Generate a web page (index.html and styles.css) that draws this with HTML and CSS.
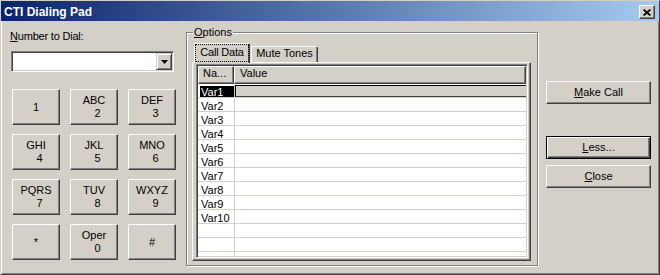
FILE: index.html
```html
<!DOCTYPE html>
<html lang="en">
  <head>
    <meta charset="UTF-8" />
    <title>CTI Dialing Pad</title>
    <link rel="stylesheet" href="styles.css">
  </head>
  <body>
    <div class="window">
      <div class="titlebar">
        <span class="title">CTI Dialing Pad</span>
        <button class="title-close" aria-label="Close">
          <svg width="8" height="7" viewBox="0 0 8 7">
            <path d="M0.6 0.5 L7.4 6.5 M7.4 0.5 L0.6 6.5" stroke="#000" stroke-width="1.7" fill="none" />
          </svg>
        </button>
      </div>

      <div class="content">
        <div class="dial-col">
          <label class="field-label" for="number"><u>N</u>umber to Dial:</label>
          <div class="combo">
            <div class="combo-input" id="number"></div>
            <div class="combo-btn">
              <svg width="7" height="4" viewBox="0 0 7 4"><polygon points="0,0 7,0 3.5,4" fill="#000" /></svg>
            </div>
          </div>

          <div class="keypad">
            <button class="key"><span>1</span></button>
            <button class="key"><span>ABC</span><span class="digit">2</span></button>
            <button class="key"><span>DEF</span><span class="digit">3</span></button>
            <button class="key"><span>GHI</span><span class="digit">4</span></button>
            <button class="key"><span>JKL</span><span class="digit">5</span></button>
            <button class="key"><span>MNO</span><span class="digit">6</span></button>
            <button class="key"><span>PQRS</span><span class="digit">7</span></button>
            <button class="key"><span>TUV</span><span class="digit">8</span></button>
            <button class="key"><span>WXYZ</span><span class="digit">9</span></button>
            <button class="key"><span>*</span></button>
            <button class="key"><span>Oper</span><span class="digit">0</span></button>
            <button class="key"><span>#</span></button>
          </div>
        </div>

        <div class="group">
          <span class="group-label"><u>O</u>ptions</span>
          <div class="tabs">
            <div class="tab active"><span class="focus">Call Data</span></div>
            <div class="tab">Mute Tones</div>
          </div>
          <div class="tab-panel">
            <div class="list">
              <div class="list-head">
                <div class="hcell name">Na...</div>
                <div class="hcell value">Value</div>
              </div>
              <div class="row selected">
                <div class="cell name"><span class="hilite">Var1</span></div>
                <div class="cell edit"></div>
              </div>
              <div class="row"><div class="cell name">Var2</div><div class="cell"></div></div>
              <div class="row"><div class="cell name">Var3</div><div class="cell"></div></div>
              <div class="row"><div class="cell name">Var4</div><div class="cell"></div></div>
              <div class="row"><div class="cell name">Var5</div><div class="cell"></div></div>
              <div class="row"><div class="cell name">Var6</div><div class="cell"></div></div>
              <div class="row"><div class="cell name">Var7</div><div class="cell"></div></div>
              <div class="row"><div class="cell name">Var8</div><div class="cell"></div></div>
              <div class="row"><div class="cell name">Var9</div><div class="cell"></div></div>
              <div class="row"><div class="cell name">Var10</div><div class="cell"></div></div>
              <div class="row"><div class="cell name"></div><div class="cell"></div></div>
              <div class="row"><div class="cell name"></div><div class="cell"></div></div>
              <div class="row"><div class="cell name"></div><div class="cell"></div></div>
            </div>
          </div>
        </div>

        <div class="actions">
          <button class="btn"><u>M</u>ake Call</button>
          <button class="btn default"><u>L</u>ess...</button>
          <button class="btn"><u>C</u>lose</button>
        </div>
      </div>
    </div>
  </body>
</html>
```

FILE: styles.css
```css
* {
  box-sizing: border-box;
}
body {
  margin: 0;
  background: #d4d0c8;
  font-family: "Liberation Sans", Arial, sans-serif;
  font-size: 11px;
  color: #000;
}
button {
  font: inherit;
  color: inherit;
  padding: 0;
  margin: 0;
}
.window {
  width: 660px;
  height: 275px;
  overflow: hidden;
  border: 1px solid;
  border-color: #d4d0c8 #404040 #404040 #d4d0c8;
  box-shadow: inset 1px 1px #fff, inset -1px -1px #808080;
}

/* title bar */
.titlebar {
  height: 20px;
  padding-top: 2px;
  display: flex;
  align-items: center;
  background: linear-gradient(to right, #0a246a, #a6caf0);
}
.title {
  flex: 1;
  padding-left: 3px;
  line-height: 14px;
  font-size: 12px;
  font-weight: bold;
  color: #fff;
}
.title-close {
  width: 16px;
  height: 14px;
  margin-right: 4px;
  display: flex;
  align-items: center;
  justify-content: center;
  background: #d4d0c8;
  border: 1px solid;
  border-color: #fff #404040 #404040 #fff;
  box-shadow: inset -1px -1px #808080;
}

.content {
  display: flex;
  align-items: flex-start;
  padding-left: 9px;
}

/* left column */
.dial-col {
  width: 167px;
  margin-top: 9px;
}
.field-label {
  display: block;
  line-height: 13px;
  letter-spacing: -0.2px;
}
.combo {
  width: 163px;
  height: 21px;
  margin: 8px 0 0 1px;
  display: flex;
  padding: 1px;
  background: #fff;
  border: 1px solid;
  border-color: #808080 #fff #fff #808080;
  box-shadow: inset 1px 1px #404040, inset -1px -1px #d4d0c8;
}
.combo-input {
  flex: 1;
}
.combo-btn {
  width: 16px;
  display: flex;
  align-items: center;
  justify-content: center;
  background: #d4d0c8;
  border: 1px solid;
  border-color: #d4d0c8 #404040 #404040 #d4d0c8;
  box-shadow: inset 1px 1px #fff, inset -1px -1px #808080;
}
.keypad {
  margin: 17px 0 0 2px;
  display: grid;
  grid-template-columns: repeat(3, 48px);
  grid-auto-rows: 36px;
  column-gap: 10px;
  row-gap: 9px;
}
.key,
.btn {
  background: #d4d0c8;
  border: 1px solid;
  border-color: #fff #404040 #404040 #fff;
  box-shadow: inset -1px -1px #808080;
}
.key {
  display: flex;
  flex-direction: column;
  align-items: center;
  justify-content: center;
  line-height: 13px;
}
.key .digit {
  padding-left: 7px;
}

/* options group */
.group {
  position: relative;
  width: 352px;
  height: 234px;
  margin: 11px 0 0 9px;
  padding: 10px 0 0 5px;
  border: 1px solid #808080;
  box-shadow: inset 1px 1px #fff, 1px 1px #fff;
}
.group-label {
  position: absolute;
  top: -7px;
  left: 6px;
  padding: 0 1px;
  line-height: 13px;
  background: #d4d0c8;
}
.tabs {
  display: flex;
  align-items: flex-end;
  height: 19px;
  padding-left: 2px;
}
.tab {
  height: 16px;
  width: 67px;
  margin-left: 1px;
  line-height: 13px;
  text-align: center;
  border: 1px solid;
  border-bottom: 0;
  border-color: #fff #404040 #404040 #fff;
  border-radius: 2px 2px 0 0;
  box-shadow: inset -1px 0 #808080;
}
.tab.active {
  position: relative;
  z-index: 1;
  width: 56px;
  height: 20px;
  margin: 0 0 -1px 0;
  padding: 1px 1px 0 1px;
  background: #d4d0c8;
  letter-spacing: -0.2px;
}
.focus {
  display: block;
  height: 16px;
  padding-top: 1px;
  outline: 1px dotted #000;
}
.tab-panel {
  width: 339px;
  height: 199px;
  padding: 1px 2px 2px 3px;
  border: 1px solid;
  border-color: #fff #404040 #404040 #fff;
  box-shadow: inset -1px -1px #808080;
}

/* list view */
.list {
  height: 194px;
  padding: 1px;
  overflow: hidden;
  background: #fff;
  border: 1px solid;
  border-color: #808080 #fff #fff #808080;
  box-shadow: inset 1px 1px #404040, inset -1px -1px #d4d0c8;
}
.list-head {
  display: flex;
  height: 18px;
  background: #d4d0c8;
}
.hcell {
  height: 18px;
  line-height: 13px;
  border: 1px solid;
  border-color: #fff #404040 #404040 #fff;
  box-shadow: inset -1px -1px #808080;
}
.hcell.name {
  width: 36px;
  padding-left: 4px;
}
.hcell.value {
  flex: 1;
  padding-left: 5px;
}
.row {
  display: flex;
  height: 14px;
  border-bottom: 1px solid #d4d0c8;
}
.cell {
  flex: 1;
  line-height: 13px;
  overflow: hidden;
}
.cell.name {
  flex: none;
  width: 37px;
  padding: 2px 0 0 3px;
  border-right: 1px solid #d4d0c8;
}
.row.selected .cell.name {
  padding: 2px 0 0 2px;
}
.hilite {
  display: block;
  height: 11px;
  line-height: 12px;
  padding-left: 1px;
  background: #000;
  color: #fff;
}
.cell.edit {
  margin-top: 1px;
  background: #d4d0c8;
  border-top: 1px solid #000;
  border-left: 1px solid #000;
  border-bottom: 1px solid #404040;
}

/* right buttons */
.actions {
  width: 105px;
  margin: 60px 0 0 8px;
  display: flex;
  flex-direction: column;
}
.btn {
  height: 23px;
  line-height: 13px;
}
.btn.default {
  margin-top: 32px;
  border: 1px solid #000;
  box-shadow: inset 1px 1px #fff, inset -1px -1px #404040, inset -2px -2px #808080;
}
.btn + .btn:not(.default) {
  margin-top: 6px;
}
```
